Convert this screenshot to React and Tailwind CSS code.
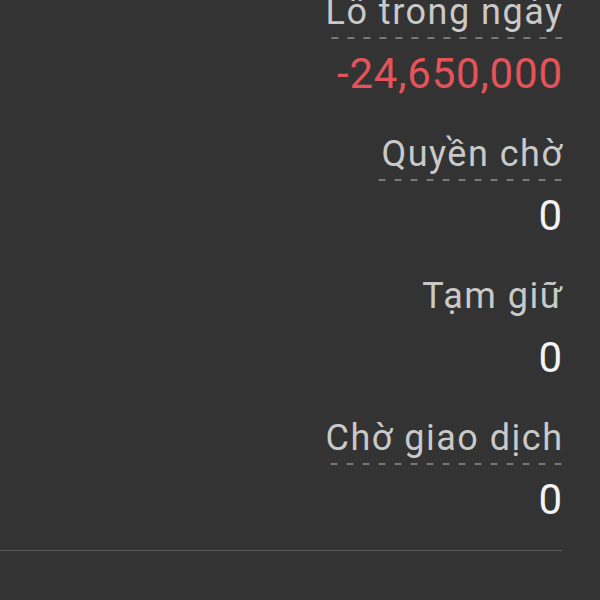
const rows = [
  { label: 'Lô trong ngày', value: '-24,650,000', red: true, dashed: true },
  { label: 'Quyền chờ', value: '0', dashed: true },
  { label: 'Tạm giữ', value: '0' },
  { label: 'Chờ giao dịch', value: '0', dashed: true },
];

const Row = ({ label, value, red, dashed }) => (
  <div className="flex flex-col items-end h-[142px]">
    <div className="flex flex-col items-stretch">
      <span className="pl-[3px] text-[36px] leading-[36px] tracking-[1.5px] -mr-[1.5px] text-[#c9c9c9] whitespace-nowrap">
        {label}
      </span>
      <div
        className={`mt-[7px] h-[2px] ${
          dashed
            ? 'bg-[linear-gradient(90deg,transparent_0_9px,#787878_9px_16px)] bg-[length:16px_2px] bg-repeat-x bg-right'
            : ''
        }`}
      />
    </div>
    <span
      className={`mt-[14px] text-[42px] leading-[41px] tracking-[0.8px] -mr-[0.8px] whitespace-nowrap ${
        red ? 'text-[#e5535a]' : 'text-[#f4f4f4]'
      }`}
    >
      {value}
    </span>
  </div>
);

export default function App() {
  return (
    <div
      className="w-[600px] h-[600px] overflow-hidden bg-[#333333]"
      style={{ fontFamily: 'Roboto, "Noto Sans", sans-serif' }}
    >
      <div className="w-[562px] -mt-[6px] flex flex-col">
        {rows.map((r) => (
          <Row key={r.label} {...r} />
        ))}
        <div className="-mt-[12px] h-px bg-[#5c5c5c]" />
      </div>
    </div>
  );
}
